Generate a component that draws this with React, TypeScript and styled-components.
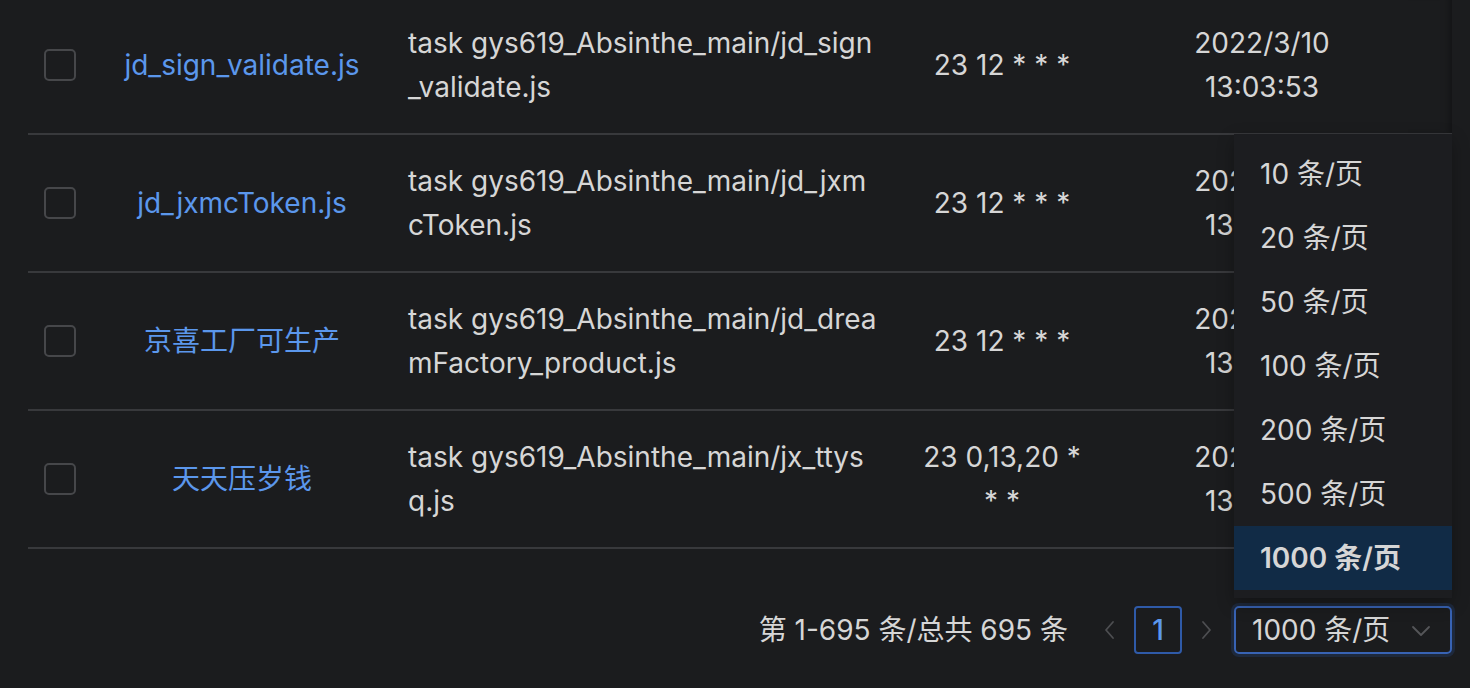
import React from "react";
import styled, { createGlobalStyle } from "styled-components";

const Global = createGlobalStyle`
  html, body { margin: 0; padding: 0; background: #1b1c1e; }
  body {
    font-family: "Inter", "Noto Sans CJK SC", sans-serif;
    font-size: 28px;
    line-height: 44px;
    color: #d6d6d6;
    overflow: hidden;
  }
`;

const Page = styled.div`
  width: 1470px;
  height: 688px;
  padding: 0 18px 0 28px;
  box-sizing: border-box;
  overflow: hidden;
`;

const Table = styled.div`
  margin-top: -3px;
  display: flex;
  flex-direction: column;
`;

const Row = styled.div`
  display: grid;
  grid-template-columns: 64px 300px 496px 228px 292px 44px;
  border-bottom: 2px solid #38393c;
`;

const Cell = styled.div<{ $align?: "left" | "center"; $padX?: number }>`
  padding: 24px ${(p) => p.$padX ?? 16}px;
  min-height: 88px;
  display: flex;
  align-items: center;
  justify-content: ${(p) => (p.$align === "left" ? "flex-start" : "center")};
  text-align: ${(p) => p.$align ?? "center"};
`;

const CmdText = styled.span`
  display: flex;
  flex-direction: column;
  white-space: nowrap;
`;

const FixedCell = styled.div`
  box-shadow: inset -8px 0 8px -6px rgba(0, 0, 0, 0.35);
`;

const Checkbox = styled.span`
  width: 32px;
  height: 32px;
  box-sizing: border-box;
  border: 2px solid #46474a;
  border-radius: 5px;
  display: block;
`;

const NameLink = styled.span`
  color: #5b97ec;
`;

const Footer = styled.div`
  margin-top: 57px;
  display: flex;
  align-items: center;
  justify-content: flex-end;
  height: 48px;
`;

const Total = styled.span`
  margin-right: 18px;
  color: #d6d6d6;
`;

const ArrowBtn = styled.span`
  width: 48px;
  height: 48px;
  display: flex;
  align-items: center;
  justify-content: center;
  color: #4d4e51;
`;

const PageItem = styled.span`
  width: 48px;
  height: 48px;
  box-sizing: border-box;
  border: 2px solid #2f5aa8;
  border-radius: 4px;
  display: flex;
  align-items: center;
  justify-content: center;
  color: #5b97ec;
  font-weight: 500;
`;

const SelectWrap = styled.div`
  position: relative;
  margin-left: 4px;
  width: 218px;
`;

const SelectBox = styled.div`
  height: 48px;
  box-sizing: border-box;
  border: 2px solid #3863b4;
  border-radius: 5px;
  box-shadow: 0 0 0 3px rgba(40, 80, 150, 0.25);
  display: flex;
  align-items: center;
  justify-content: space-between;
  padding: 0 18px 0 16px;
  color: #d6d6d6;
`;

const Menu = styled.div`
  position: absolute;
  left: 0;
  right: 0;
  bottom: calc(100% + 8px);
  background: #1c1d20;
  padding: 8px 0;
  box-shadow: 0 6px 16px rgba(0, 0, 0, 0.3);
`;

const MenuItem = styled.div<{ $active?: boolean }>`
  height: 64px;
  display: flex;
  align-items: center;
  padding: 0 26px;
  background: ${(p) => (p.$active ? "#112b46" : "transparent")};
  font-weight: ${(p) => (p.$active ? 600 : 400)};
  color: #d6d6d6;
`;

const Chevron = ({ dir }: { dir: "left" | "right" | "down" }) => {
  const d =
    dir === "left"
      ? "M14 4 L7 12 L14 20"
      : dir === "right"
      ? "M8 4 L15 12 L8 20"
      : "M3 7 L11 15 L19 7";
  return (
    <svg width="22" height="24" viewBox="0 0 22 24" fill="none">
      <path d={d} stroke="currentColor" strokeWidth="1.8" strokeLinecap="round" strokeLinejoin="round" />
    </svg>
  );
};

const DownIcon = styled.span`
  color: #555659;
  display: flex;
  margin-top: 4px;
`;

const rows = [
  { name: "jd_sign_validate.js", cmd: ["task gys619_Absinthe_main/jd_sign", "_validate.js"], cron: "23 12 * * *" },
  { name: "jd_jxmcToken.js", cmd: ["task gys619_Absinthe_main/jd_jxm", "cToken.js"], cron: "23 12 * * *" },
  { name: "京喜工厂可生产", cmd: ["task gys619_Absinthe_main/jd_drea", "mFactory_product.js"], cron: "23 12 * * *" },
  { name: "天天压岁钱", cmd: ["task gys619_Absinthe_main/jx_ttys", "q.js"], cron: "23 0,13,20 * * *" },
];

const sizes = [10, 20, 50, 100, 200, 500, 1000];

export default function App() {
  return (
    <Page>
      <Global />
      <Table>
        {rows.map((r) => (
          <Row key={r.name}>
            <Cell>
              <Checkbox />
            </Cell>
            <Cell>
              <NameLink>{r.name}</NameLink>
            </Cell>
            <Cell $align="left">
              <CmdText>
                {r.cmd.map((l) => (
                  <span key={l}>{l}</span>
                ))}
              </CmdText>
            </Cell>
            <Cell $padX={26}>{r.cron}</Cell>
            <Cell $padX={40}>2022/3/10 13:03:53</Cell>
            <FixedCell />
          </Row>
        ))}
      </Table>
      <Footer>
        <Total>第 1-695 条/总共 695 条</Total>
        <ArrowBtn>
          <Chevron dir="left" />
        </ArrowBtn>
        <PageItem>1</PageItem>
        <ArrowBtn>
          <Chevron dir="right" />
        </ArrowBtn>
        <SelectWrap>
          <Menu>
            {sizes.map((s) => (
              <MenuItem key={s} $active={s === 1000}>
                {s} 条/页
              </MenuItem>
            ))}
          </Menu>
          <SelectBox>
            <span>1000 条/页</span>
            <DownIcon>
              <Chevron dir="down" />
            </DownIcon>
          </SelectBox>
        </SelectWrap>
      </Footer>
    </Page>
  );
}
